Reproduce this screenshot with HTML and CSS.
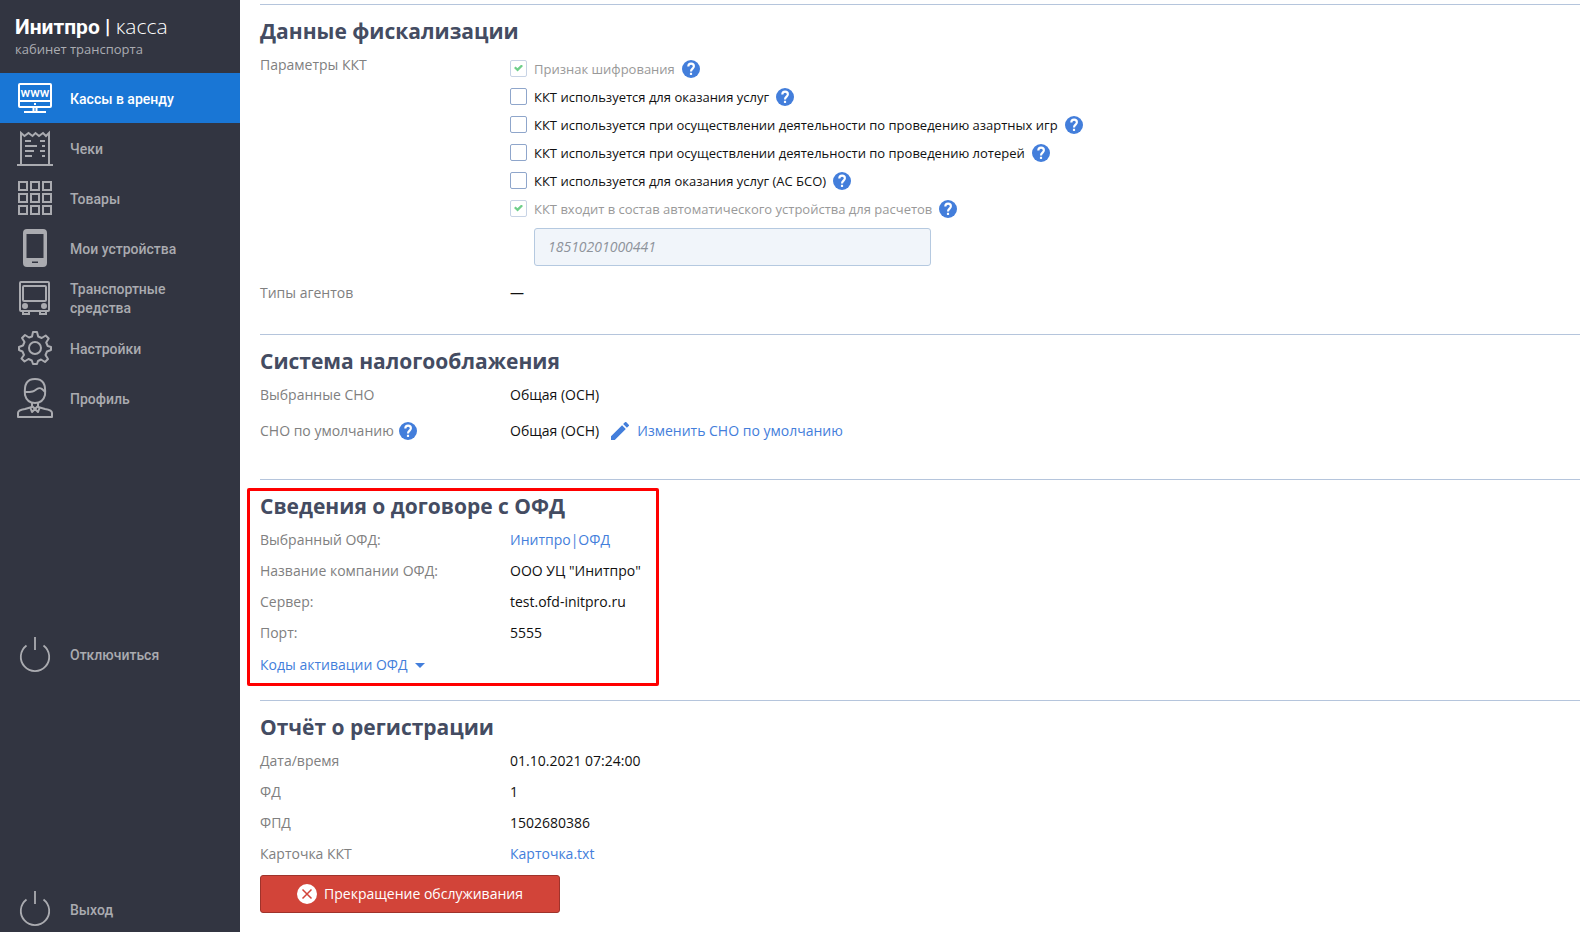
FILE: index.html
```html
<!DOCTYPE html>
<html lang="ru">
<head>
    <meta charset="UTF-8">
    <meta name="viewport" content="width=device-width, initial-scale=1.0">
    <title>Инитпро | касса</title>
    <link rel="stylesheet" href="styles.css">
</head>
<body>
    <!-- Shared icons -->
    <svg class="sprite" aria-hidden="true">
        <symbol id="icon-help" viewBox="2 2 20 20">
            <circle cx="12" cy="12" r="10" fill="currentColor"/>
            <path d="M9 9.200C9 7.400 10.300 6.100 12.100 6.100S15.200 7.300 15.200 9C15.200 11.500 12 11.700 12 14.800" fill="none" stroke="#fff" stroke-width="2.400"/>
            <rect x="10.800" y="16.200" width="2.400" height="2.400" fill="#fff"/>
        </symbol>
        <symbol id="icon-power" viewBox="0 0 40 40">
            <path d="M11.500 10.500a14.200 14.200 0 1 0 17 0M20 2v13" fill="none" stroke="currentColor" stroke-width="1.800"/>
        </symbol>
    </svg>

    <div class="layout">
        <aside class="sidebar">
            <div class="sidebar-top">
                <div class="logo">
                    <div class="logo-name"><b>Инитпро |</b> <span>касса</span></div>
                    <div class="logo-sub">кабинет транспорта</div>
                </div>
                <nav>
                    <a class="menu-item active" href="#">
                        <svg class="menu-icon" viewBox="0 0 40 40" fill="none" stroke="currentColor" stroke-width="2">
                            <rect x="4" y="6" width="32" height="23" rx="1"/>
                            <path d="M4 23h32M18.500 29v4.500M21.500 29v4.500M9 34h22"/>
                            <rect x="19" y="25" width="2" height="2" fill="currentColor" stroke="none"/>
                            <text class="icon-text" x="20" y="19" text-anchor="middle">www</text>
                        </svg>
                        <span>Кассы в аренду</span>
                    </a>
                    <a class="menu-item" href="#">
                        <svg class="menu-icon" viewBox="0 0 40 40" fill="none" stroke="currentColor" stroke-width="2">
                            <path d="M6 36V5l3.500 3 4-3 4 3 3-3 3.500 3 4-3 3 3 3-3v31M2 37h36"/>
                            <path d="M10 13h6M10 18h12M10 23h9M10 28h7M25 13h5M27 18h3M25 23h5M27 28h3"/>
                        </svg>
                        <span>Чеки</span>
                    </a>
                    <a class="menu-item" href="#">
                        <svg class="menu-icon" viewBox="0 0 40 40" fill="none" stroke="currentColor" stroke-width="2">
                            <path d="M4 4h8v8h-8zM16 4h8v8h-8zM28 4h8v8h-8zM4 16h8v8h-8zM16 16h8v8h-8zM28 16h8v8h-8zM4 28h8v8h-8zM16 28h8v8h-8zM28 28h8v8h-8z"/>
                        </svg>
                        <span>Товары</span>
                    </a>
                    <a class="menu-item" href="#">
                        <svg class="menu-icon" viewBox="0 0 40 40" fill="currentColor">
                            <path fill-rule="evenodd" d="M12 1h16a4 4 0 0 1 4 4v30a4 4 0 0 1-4 4H12a4 4 0 0 1-4-4V5a4 4 0 0 1 4-4zM11.500 6v24h17V6zM17 33.500v1.500h6v-1.500z"/>
                        </svg>
                        <span>Мои устройства</span>
                    </a>
                    <a class="menu-item" href="#">
                        <svg class="menu-icon" viewBox="0 0 40 40" fill="none" stroke="currentColor" stroke-width="2">
                            <rect x="5" y="4" width="29" height="29" rx="1"/>
                            <rect x="8" y="8" width="23" height="15" rx="1"/>
                            <circle cx="10" cy="28" r="2" fill="currentColor"/>
                            <circle cx="29" cy="28" r="2" fill="currentColor"/>
                            <path d="M8 33v3h6v-3M25 33v3h6v-3"/>
                        </svg>
                        <span>Транспортные средства</span>
                    </a>
                    <a class="menu-item" href="#">
                        <svg class="menu-icon" viewBox="0 0 40 40" fill="none" stroke="currentColor" stroke-width="2" stroke-linejoin="round">
                            <path d="M18 4h4l1.200 4.500 3.500 1.500 4-2.500 3 3-2.500 4 1.500 3.500L36 19v3l-4 1.500-1.500 3.500 2.500 4-3 3-4-2.500-3 1.500L22 36h-4l-1.200-3.500-3.300-1.500-4 2.500-3-3L9 27l-1.500-3.500L4 22v-3l4-1.500L9.500 14 7 10l3-3 4 2.500L17 8.500z"/>
                            <circle cx="20" cy="20" r="6"/>
                        </svg>
                        <span>Настройки</span>
                    </a>
                    <a class="menu-item" href="#">
                        <svg class="menu-icon" viewBox="0 0 40 40" fill="none" stroke="currentColor" stroke-width="2" stroke-linejoin="round">
                            <path d="M10 17C9 6 12 1 20 1s11 5 10 16c-1 4-4 8-10 8S11 21 10 17zM10 14c9 0 9-1 12-3s5-1 8 3"/>
                            <path d="M17 25v4L10 31q-7 1-7 4v4h34v-4q0-3-7-4l-7-2v-4"/>
                            <path d="M15 29l2 5 3-3 3 3 2-5M17 28l3 3 3-3"/>
                        </svg>
                        <span>Профиль</span>
                    </a>
                </nav>
            </div>
            <a class="menu-item" href="#">
                <svg class="menu-icon"><use href="#icon-power"/></svg>
                <span>Отключиться</span>
            </a>
            <a class="menu-item menu-exit" href="#">
                <svg class="menu-icon"><use href="#icon-power"/></svg>
                <span>Выход</span>
            </a>
        </aside>

        <main class="content">
            <section class="section section-fiscal">
                <h2>Данные фискализации</h2>
                <div class="row">
                    <div class="name">Параметры ККТ</div>
                    <div class="checks">
                        <div class="check disabled">
                            <input type="checkbox" id="encryption" checked disabled>
                            <label for="encryption">Признак шифрования</label>
                            <button class="help" type="button" aria-label="Справка"><svg><use href="#icon-help"/></svg></button>
                        </div>
                        <div class="check">
                            <input type="checkbox" id="services">
                            <label for="services">ККТ используется для оказания услуг</label>
                            <button class="help" type="button" aria-label="Справка"><svg><use href="#icon-help"/></svg></button>
                        </div>
                        <div class="check">
                            <input type="checkbox" id="gambling">
                            <label for="gambling">ККТ используется при осуществлении деятельности по проведению азартных игр</label>
                            <button class="help" type="button" aria-label="Справка"><svg><use href="#icon-help"/></svg></button>
                        </div>
                        <div class="check">
                            <input type="checkbox" id="lottery">
                            <label for="lottery">ККТ используется при осуществлении деятельности по проведению лотерей</label>
                            <button class="help" type="button" aria-label="Справка"><svg><use href="#icon-help"/></svg></button>
                        </div>
                        <div class="check">
                            <input type="checkbox" id="bso">
                            <label for="bso">ККТ используется для оказания услуг (АС БСО)</label>
                            <button class="help" type="button" aria-label="Справка"><svg><use href="#icon-help"/></svg></button>
                        </div>
                        <div class="check disabled">
                            <input type="checkbox" id="automat" checked disabled>
                            <label for="automat">ККТ входит в состав автоматического устройства для расчетов</label>
                            <button class="help" type="button" aria-label="Справка"><svg><use href="#icon-help"/></svg></button>
                        </div>
                        <input class="number" type="text" value="18510201000441" aria-label="Номер автоматического устройства" disabled>
                    </div>
                </div>
                <div class="row">
                    <div class="name">Типы агентов</div>
                    <div>—</div>
                </div>
            </section>

            <section class="section section-tax">
                <h2>Система налогооблажения</h2>
                <div class="row">
                    <div class="name">Выбранные СНО</div>
                    <div>Общая (ОСН)</div>
                </div>
                <div class="row">
                    <div class="name">СНО по умолчанию
                        <button class="help" type="button" aria-label="Справка"><svg><use href="#icon-help"/></svg></button>
                    </div>
                    <div class="value">Общая (ОСН)
                        <a class="edit" href="#">
                            <svg viewBox="3 3 18 18"><path fill="currentColor" d="M3 17.250V21h3.750L17.810 9.940l-3.750-3.750zM20.710 7.040a1 1 0 0 0 0-1.410l-2.340-2.340a1 1 0 0 0-1.410 0l-1.830 1.830 3.750 3.750z"/></svg>
                            Изменить СНО по умолчанию
                        </a>
                    </div>
                </div>
            </section>

            <section class="section section-ofd">
                <div class="highlight"></div>
                <h2>Сведения о договоре с ОФД</h2>
                <div class="row">
                    <div class="name">Выбранный ОФД:</div>
                    <div><a href="#">Инитпро|ОФД</a></div>
                </div>
                <div class="row">
                    <div class="name">Название компании ОФД:</div>
                    <div>ООО УЦ "Инитпро"</div>
                </div>
                <div class="row">
                    <div class="name">Сервер:</div>
                    <div>test.ofd-initpro.ru</div>
                </div>
                <div class="row">
                    <div class="name">Порт:</div>
                    <div>5555</div>
                </div>
                <button class="codes" type="button">Коды активации ОФД</button>
            </section>

            <section class="section">
                <h2>Отчёт о регистрации</h2>
                <div class="row">
                    <div class="name">Дата/время</div>
                    <div>01.10.2021 07:24:00</div>
                </div>
                <div class="row">
                    <div class="name">ФД</div>
                    <div>1</div>
                </div>
                <div class="row">
                    <div class="name">ФПД</div>
                    <div>1502680386</div>
                </div>
                <div class="row">
                    <div class="name">Карточка ККТ</div>
                    <div><a href="#">Карточка.txt</a></div>
                </div>
                <button class="stop" type="button">
                    <svg viewBox="0 0 20 20"><circle cx="10" cy="10" r="10" fill="#fff"/><path d="M5.500 5.500l9 9M14.500 5.500l-9 9" stroke="#d24439" stroke-width="1.500"/></svg>
                    Прекращение обслуживания
                </button>
            </section>
        </main>
    </div>
</body>
</html>
```

FILE: styles.css
```css
* {
    box-sizing: border-box;
}
body {
    margin: 0;
    font-family: "Open Sans", "Noto Sans", sans-serif;
    font-size: 14px;
    line-height: 20px;
    color: #111;
    background-color: #fff;
}
a {
    color: #437edb;
    text-decoration: none;
}
button {
    padding: 0;
    border: none;
    background: none;
    font: inherit;
    cursor: pointer;
}
.sprite {
    display: none;
}
.layout {
    display: flex;
    min-height: 100vh;
}

/* Sidebar */
.sidebar {
    display: flex;
    flex-direction: column;
    justify-content: space-between;
    flex: none;
    width: 240px;
    height: 100vh;
    background-color: #323541;
}
.logo {
    height: 73px;
    padding: 14px 15px 0;
    color: #fff;
}
.logo-name {
    font-size: 21px;
    line-height: 24px;
}
.logo-name b {
    font-family: Roboto, sans-serif;
    font-weight: 700;
}
.logo-name span {
    font-weight: 300;
}
.logo-sub {
    font-size: 13px;
    color: #aaacb2;
}
.menu-item {
    display: flex;
    align-items: center;
    gap: 15px;
    height: 50px;
    padding: 0 50px 0 15px;
    font-family: Roboto, sans-serif;
    font-weight: 500;
    line-height: 19px;
    color: #aaabb0;
}
.menu-item span {
    padding-top: 2px;
}
.menu-item.active {
    background-color: #1976d5;
    color: #fff;
}
.menu-exit {
    height: 46px;
}
.menu-icon {
    flex: none;
    width: 40px;
    height: 40px;
}
.icon-text {
    font-size: 13px;
    fill: currentColor;
    stroke: none;
}

/* Content */
.content {
    flex: 1;
    padding: 4px 5px 0 20px;
}
.section {
    position: relative;
    padding: 11px 0 12px;
    border-top: 1px solid #b5c5dc;
}
h2 {
    margin: 0 0 3px;
    font-size: 21px;
    font-weight: 700;
    line-height: 30px;
    color: #444c62;
}
.row {
    display: flex;
    align-items: flex-start;
    padding: 6px 0 5px;
}
.name {
    display: flex;
    align-items: center;
    gap: 5px;
    flex: none;
    width: 250px;
    color: #808080;
}
.value {
    display: flex;
    align-items: center;
    gap: 12px;
}
.help {
    flex: none;
    width: 18px;
    height: 18px;
    color: #437edb;
}
.help svg {
    display: block;
    width: 18px;
    height: 18px;
}
.check {
    display: flex;
    align-items: center;
    height: 28px;
    font-size: 13px;
}
.check input {
    appearance: none;
    width: 17px;
    height: 17px;
    margin: 0 7px 2px 0;
    border: 1px solid #8fa6cb;
    border-radius: 2px;
}
.check input:checked {
    display: grid;
    place-items: center;
    border-color: #c7d3e5;
}
.check input:checked::before {
    content: "";
    width: 9px;
    height: 7px;
    background-color: #6fcf8a;
    clip-path: polygon(0 50%, 18% 30%, 38% 55%, 82% 0, 100% 20%, 40% 100%);
}
.check .help {
    margin-left: 7px;
}
.check.disabled label {
    color: #999;
}
.number {
    display: block;
    width: 397px;
    height: 38px;
    margin: 5px 0 6px 24px;
    padding: 0 13px 2px;
    border: 1px solid #b5c9e0;
    border-radius: 3px;
    background-color: #f1f5fa;
    font: italic 14px "Open Sans", sans-serif;
    color: #8e939b;
}
.edit {
    display: flex;
    align-items: center;
    gap: 8px;
}
.edit svg {
    width: 18px;
    height: 18px;
}
.section-fiscal,
.section-tax {
    padding-bottom: 26px;
}
.section-tax .row + .row {
    padding: 11px 0 12px;
}
.section-ofd {
    padding-bottom: 18px;
}
.highlight {
    position: absolute;
    top: 8px;
    bottom: 14px;
    left: -13px;
    width: 412px;
    border: 3px solid #f00;
    border-radius: 2px;
    pointer-events: none;
}
.codes {
    display: flex;
    align-items: center;
    gap: 7px;
    height: 34px;
    color: #437edb;
}
.codes::after {
    content: "";
    border: 5px solid transparent;
    border-top-color: currentColor;
    border-bottom: none;
}
.stop {
    display: flex;
    align-items: center;
    justify-content: center;
    gap: 7px;
    width: 300px;
    height: 38px;
    margin-top: 6px;
    border: 1px solid #9f332b;
    border-radius: 3px;
    background-color: #d24439;
    color: #fff;
}
.stop svg {
    width: 20px;
    height: 20px;
}
```
